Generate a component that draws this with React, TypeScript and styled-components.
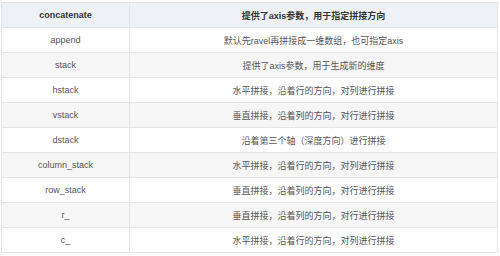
import { FC } from "react";
import styled, { createGlobalStyle } from "styled-components";

const GlobalStyle = createGlobalStyle`
  html, body {
    margin: 0;
    padding: 0;
    background: #ffffff;
  }
`;

const Page = styled.div`
  padding: 2px 3px 0 1px;
`;

const Table = styled.table`
  width: 497px;
  border-collapse: collapse;
  table-layout: fixed;
  font-family: "Liberation Sans", "Noto Sans CJK SC", sans-serif;
  font-size: 9px;
  color: #555;
`;

const HeadCell = styled.th<{ $first?: boolean }>`
  width: ${(p) => (p.$first ? "127px" : "auto")};
  height: 24px;
  padding: 0;
  border: 1px solid #e3e5e8;
  background: #eef2f6;
  color: #333;
  font-weight: bold;
  text-align: center;
`;

const Row = styled.tr<{ $shaded: boolean }>`
  background: ${(p) => (p.$shaded ? "#f6f6f6" : "#ffffff")};
`;

const Cell = styled.td`
  height: 24px;
  padding: 0;
  border: 1px solid #e6e6e6;
  text-align: center;
`;

const rows: [string, string][] = [
  ["append", "默认先ravel再拼接成一维数组，也可指定axis"],
  ["stack", "提供了axis参数，用于生成新的维度"],
  ["hstack", "水平拼接，沿着行的方向，对列进行拼接"],
  ["vstack", "垂直拼接，沿着列的方向，对行进行拼接"],
  ["dstack", "沿着第三个轴（深度方向）进行拼接"],
  ["column_stack", "水平拼接，沿着行的方向，对列进行拼接"],
  ["row_stack", "垂直拼接，沿着列的方向，对行进行拼接"],
  ["r_", "垂直拼接，沿着列的方向，对行进行拼接"],
  ["c_", "水平拼接，沿着行的方向，对列进行拼接"],
];

const App: FC = () => (
  <Page>
    <GlobalStyle />
    <Table>
      <thead>
        <tr>
          <HeadCell $first>concatenate</HeadCell>
          <HeadCell>提供了axis参数，用于指定拼接方向</HeadCell>
        </tr>
      </thead>
      <tbody>
        {rows.map(([name, desc], i) => (
          <Row key={name} $shaded={i % 2 === 1}>
            <Cell>{name}</Cell>
            <Cell>{desc}</Cell>
          </Row>
        ))}
      </tbody>
    </Table>
  </Page>
);

export default App;
